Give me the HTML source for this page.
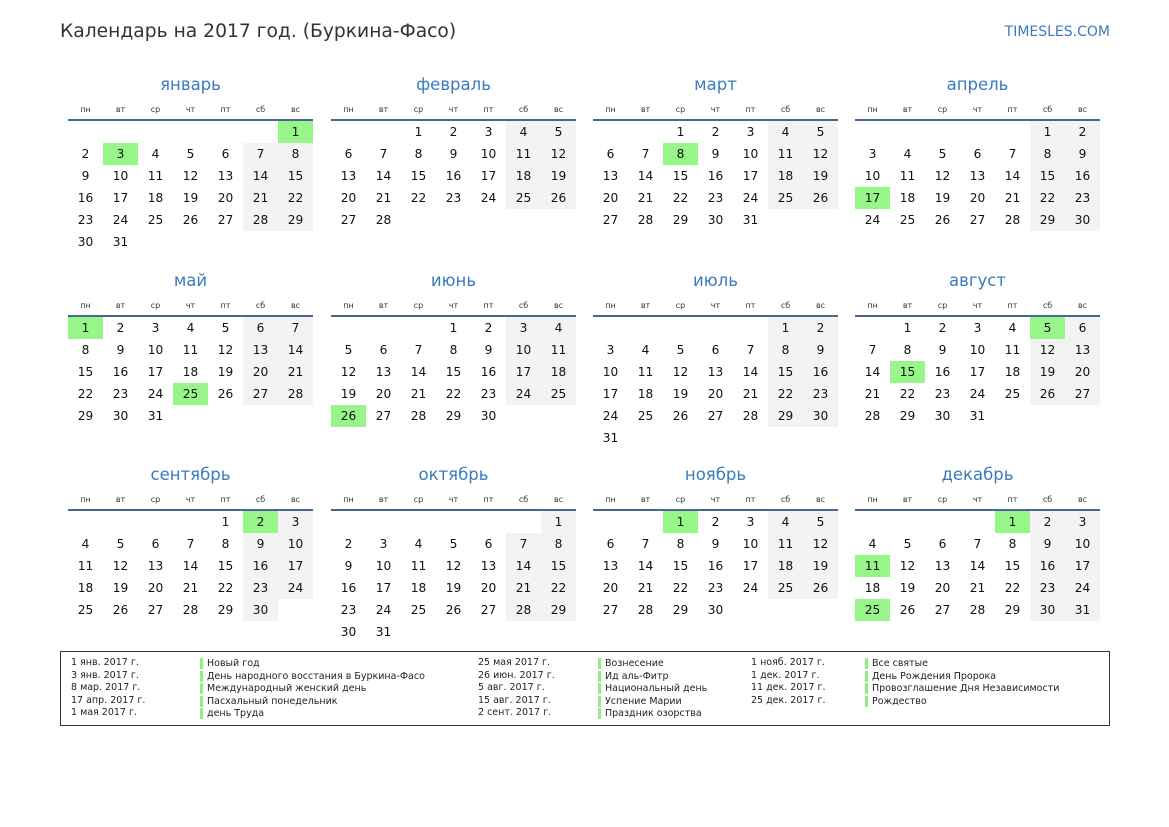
<!DOCTYPE html>
<html><head><meta charset="utf-8"><style>
body{margin:0;width:1169px;height:827px;background:#fff;font-family:"DejaVu Sans","Liberation Sans",sans-serif;position:relative;overflow:hidden;color:#111}
.t{position:absolute;left:60px;top:21px;font-size:18.7px;color:#333}
.s{position:absolute;right:59px;top:24px;font-size:14px;color:#3a7bbf}
.m{position:absolute;width:245px}
.m h2{margin:0;height:24px;line-height:24px;font-size:16.5px;font-weight:normal;color:#3a7bbf;text-align:center}
.d{display:flex;height:18px;padding-top:4px;line-height:18px;font-size:8px;color:#333;border-bottom:2px solid #4a6592}
.d span{width:35px;text-align:center}
table{border-collapse:collapse}
td{width:35px;height:22px;padding:0;text-align:center;font-size:12.2px}
td:nth-child(n+6){background:#f3f3f3}
td:empty{background:none}
td.h{background:#98f58a}
.lg{position:absolute;left:60px;top:651px;width:1048px;height:73px;border:1px solid #333;font-size:9.5px;color:#222}
.c{position:absolute;top:5px;line-height:12.5px}
.b span{display:block;border-left:3px solid #8fef80;padding-left:4px;height:11px;line-height:11px;margin-bottom:1.5px}
</style></head><body>
<div class="t">Календарь на 2017 год. (Буркина-Фасо)</div>
<div class="s">TIMESLES.COM</div>

<div class="m" style="left:68px;top:73px"><h2>январь</h2><div class="d"><span>пн</span><span>вт</span><span>ср</span><span>чт</span><span>пт</span><span>сб</span><span>вс</span></div><table>
<tr><td></td><td></td><td></td><td></td><td></td><td></td><td class="h">1</td></tr>
<tr><td>2</td><td class="h">3</td><td>4</td><td>5</td><td>6</td><td>7</td><td>8</td></tr>
<tr><td>9</td><td>10</td><td>11</td><td>12</td><td>13</td><td>14</td><td>15</td></tr>
<tr><td>16</td><td>17</td><td>18</td><td>19</td><td>20</td><td>21</td><td>22</td></tr>
<tr><td>23</td><td>24</td><td>25</td><td>26</td><td>27</td><td>28</td><td>29</td></tr>
<tr><td>30</td><td>31</td><td></td><td></td><td></td><td></td><td></td></tr></table></div>

<div class="m" style="left:331px;top:73px"><h2>февраль</h2><div class="d"><span>пн</span><span>вт</span><span>ср</span><span>чт</span><span>пт</span><span>сб</span><span>вс</span></div><table>
<tr><td></td><td></td><td>1</td><td>2</td><td>3</td><td>4</td><td>5</td></tr>
<tr><td>6</td><td>7</td><td>8</td><td>9</td><td>10</td><td>11</td><td>12</td></tr>
<tr><td>13</td><td>14</td><td>15</td><td>16</td><td>17</td><td>18</td><td>19</td></tr>
<tr><td>20</td><td>21</td><td>22</td><td>23</td><td>24</td><td>25</td><td>26</td></tr>
<tr><td>27</td><td>28</td><td></td><td></td><td></td><td></td><td></td></tr></table></div>

<div class="m" style="left:593px;top:73px"><h2>март</h2><div class="d"><span>пн</span><span>вт</span><span>ср</span><span>чт</span><span>пт</span><span>сб</span><span>вс</span></div><table>
<tr><td></td><td></td><td>1</td><td>2</td><td>3</td><td>4</td><td>5</td></tr>
<tr><td>6</td><td>7</td><td class="h">8</td><td>9</td><td>10</td><td>11</td><td>12</td></tr>
<tr><td>13</td><td>14</td><td>15</td><td>16</td><td>17</td><td>18</td><td>19</td></tr>
<tr><td>20</td><td>21</td><td>22</td><td>23</td><td>24</td><td>25</td><td>26</td></tr>
<tr><td>27</td><td>28</td><td>29</td><td>30</td><td>31</td><td></td><td></td></tr></table></div>

<div class="m" style="left:855px;top:73px"><h2>апрель</h2><div class="d"><span>пн</span><span>вт</span><span>ср</span><span>чт</span><span>пт</span><span>сб</span><span>вс</span></div><table>
<tr><td></td><td></td><td></td><td></td><td></td><td>1</td><td>2</td></tr>
<tr><td>3</td><td>4</td><td>5</td><td>6</td><td>7</td><td>8</td><td>9</td></tr>
<tr><td>10</td><td>11</td><td>12</td><td>13</td><td>14</td><td>15</td><td>16</td></tr>
<tr><td class="h">17</td><td>18</td><td>19</td><td>20</td><td>21</td><td>22</td><td>23</td></tr>
<tr><td>24</td><td>25</td><td>26</td><td>27</td><td>28</td><td>29</td><td>30</td></tr></table></div>

<div class="m" style="left:68px;top:269px"><h2>май</h2><div class="d"><span>пн</span><span>вт</span><span>ср</span><span>чт</span><span>пт</span><span>сб</span><span>вс</span></div><table>
<tr><td class="h">1</td><td>2</td><td>3</td><td>4</td><td>5</td><td>6</td><td>7</td></tr>
<tr><td>8</td><td>9</td><td>10</td><td>11</td><td>12</td><td>13</td><td>14</td></tr>
<tr><td>15</td><td>16</td><td>17</td><td>18</td><td>19</td><td>20</td><td>21</td></tr>
<tr><td>22</td><td>23</td><td>24</td><td class="h">25</td><td>26</td><td>27</td><td>28</td></tr>
<tr><td>29</td><td>30</td><td>31</td><td></td><td></td><td></td><td></td></tr></table></div>

<div class="m" style="left:331px;top:269px"><h2>июнь</h2><div class="d"><span>пн</span><span>вт</span><span>ср</span><span>чт</span><span>пт</span><span>сб</span><span>вс</span></div><table>
<tr><td></td><td></td><td></td><td>1</td><td>2</td><td>3</td><td>4</td></tr>
<tr><td>5</td><td>6</td><td>7</td><td>8</td><td>9</td><td>10</td><td>11</td></tr>
<tr><td>12</td><td>13</td><td>14</td><td>15</td><td>16</td><td>17</td><td>18</td></tr>
<tr><td>19</td><td>20</td><td>21</td><td>22</td><td>23</td><td>24</td><td>25</td></tr>
<tr><td class="h">26</td><td>27</td><td>28</td><td>29</td><td>30</td><td></td><td></td></tr></table></div>

<div class="m" style="left:593px;top:269px"><h2>июль</h2><div class="d"><span>пн</span><span>вт</span><span>ср</span><span>чт</span><span>пт</span><span>сб</span><span>вс</span></div><table>
<tr><td></td><td></td><td></td><td></td><td></td><td>1</td><td>2</td></tr>
<tr><td>3</td><td>4</td><td>5</td><td>6</td><td>7</td><td>8</td><td>9</td></tr>
<tr><td>10</td><td>11</td><td>12</td><td>13</td><td>14</td><td>15</td><td>16</td></tr>
<tr><td>17</td><td>18</td><td>19</td><td>20</td><td>21</td><td>22</td><td>23</td></tr>
<tr><td>24</td><td>25</td><td>26</td><td>27</td><td>28</td><td>29</td><td>30</td></tr>
<tr><td>31</td><td></td><td></td><td></td><td></td><td></td><td></td></tr></table></div>

<div class="m" style="left:855px;top:269px"><h2>август</h2><div class="d"><span>пн</span><span>вт</span><span>ср</span><span>чт</span><span>пт</span><span>сб</span><span>вс</span></div><table>
<tr><td></td><td>1</td><td>2</td><td>3</td><td>4</td><td class="h">5</td><td>6</td></tr>
<tr><td>7</td><td>8</td><td>9</td><td>10</td><td>11</td><td>12</td><td>13</td></tr>
<tr><td>14</td><td class="h">15</td><td>16</td><td>17</td><td>18</td><td>19</td><td>20</td></tr>
<tr><td>21</td><td>22</td><td>23</td><td>24</td><td>25</td><td>26</td><td>27</td></tr>
<tr><td>28</td><td>29</td><td>30</td><td>31</td><td></td><td></td><td></td></tr></table></div>

<div class="m" style="left:68px;top:463px"><h2>сентябрь</h2><div class="d"><span>пн</span><span>вт</span><span>ср</span><span>чт</span><span>пт</span><span>сб</span><span>вс</span></div><table>
<tr><td></td><td></td><td></td><td></td><td>1</td><td class="h">2</td><td>3</td></tr>
<tr><td>4</td><td>5</td><td>6</td><td>7</td><td>8</td><td>9</td><td>10</td></tr>
<tr><td>11</td><td>12</td><td>13</td><td>14</td><td>15</td><td>16</td><td>17</td></tr>
<tr><td>18</td><td>19</td><td>20</td><td>21</td><td>22</td><td>23</td><td>24</td></tr>
<tr><td>25</td><td>26</td><td>27</td><td>28</td><td>29</td><td>30</td><td></td></tr></table></div>

<div class="m" style="left:331px;top:463px"><h2>октябрь</h2><div class="d"><span>пн</span><span>вт</span><span>ср</span><span>чт</span><span>пт</span><span>сб</span><span>вс</span></div><table>
<tr><td></td><td></td><td></td><td></td><td></td><td></td><td>1</td></tr>
<tr><td>2</td><td>3</td><td>4</td><td>5</td><td>6</td><td>7</td><td>8</td></tr>
<tr><td>9</td><td>10</td><td>11</td><td>12</td><td>13</td><td>14</td><td>15</td></tr>
<tr><td>16</td><td>17</td><td>18</td><td>19</td><td>20</td><td>21</td><td>22</td></tr>
<tr><td>23</td><td>24</td><td>25</td><td>26</td><td>27</td><td>28</td><td>29</td></tr>
<tr><td>30</td><td>31</td><td></td><td></td><td></td><td></td><td></td></tr></table></div>

<div class="m" style="left:593px;top:463px"><h2>ноябрь</h2><div class="d"><span>пн</span><span>вт</span><span>ср</span><span>чт</span><span>пт</span><span>сб</span><span>вс</span></div><table>
<tr><td></td><td></td><td class="h">1</td><td>2</td><td>3</td><td>4</td><td>5</td></tr>
<tr><td>6</td><td>7</td><td>8</td><td>9</td><td>10</td><td>11</td><td>12</td></tr>
<tr><td>13</td><td>14</td><td>15</td><td>16</td><td>17</td><td>18</td><td>19</td></tr>
<tr><td>20</td><td>21</td><td>22</td><td>23</td><td>24</td><td>25</td><td>26</td></tr>
<tr><td>27</td><td>28</td><td>29</td><td>30</td><td></td><td></td><td></td></tr></table></div>

<div class="m" style="left:855px;top:463px"><h2>декабрь</h2><div class="d"><span>пн</span><span>вт</span><span>ср</span><span>чт</span><span>пт</span><span>сб</span><span>вс</span></div><table>
<tr><td></td><td></td><td></td><td></td><td class="h">1</td><td>2</td><td>3</td></tr>
<tr><td>4</td><td>5</td><td>6</td><td>7</td><td>8</td><td>9</td><td>10</td></tr>
<tr><td class="h">11</td><td>12</td><td>13</td><td>14</td><td>15</td><td>16</td><td>17</td></tr>
<tr><td>18</td><td>19</td><td>20</td><td>21</td><td>22</td><td>23</td><td>24</td></tr>
<tr><td class="h">25</td><td>26</td><td>27</td><td>28</td><td>29</td><td>30</td><td>31</td></tr></table></div>

<div class="lg">
<div class="c" style="left:10px">1 янв. 2017 г.<br>3 янв. 2017 г.<br>8 мар. 2017 г.<br>17 апр. 2017 г.<br>1 мая 2017 г.</div>
<div class="c b" style="left:139px;top:6px"><span>Новый год</span><span>День народного восстания в Буркина-Фасо</span><span>Международный женский день</span><span>Пасхальный понедельник</span><span>день Труда</span></div>
<div class="c" style="left:417px">25 мая 2017 г.<br>26 июн. 2017 г.<br>5 авг. 2017 г.<br>15 авг. 2017 г.<br>2 сент. 2017 г.</div>
<div class="c b" style="left:537px;top:6px"><span>Вознесение</span><span>Ид аль-Фитр</span><span>Национальный день</span><span>Успение Марии</span><span>Праздник озорства</span></div>
<div class="c" style="left:690px">1 нояб. 2017 г.<br>1 дек. 2017 г.<br>11 дек. 2017 г.<br>25 дек. 2017 г.</div>
<div class="c b" style="left:804px;top:6px"><span>Все святые</span><span>День Рождения Пророка</span><span>Провозглашение Дня Независимости</span><span>Рождество</span></div>
</div>
</body></html>
